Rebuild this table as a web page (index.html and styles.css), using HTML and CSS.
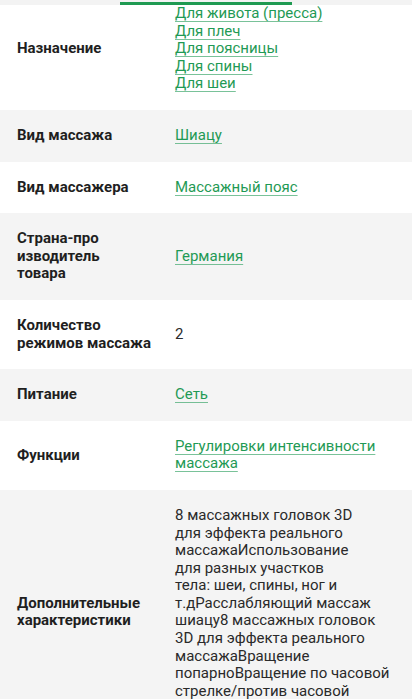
FILE: index.html
```html
<!DOCTYPE html>
<html lang="ru">
<head>
<meta charset="utf-8">
<title>Характеристики</title>
<link rel="stylesheet" href="styles.css">
</head>
<body>
<div class="tabs"><span class="tab-indicator"></span></div>
<dl class="specs">
  <div class="row">
    <dt class="label">Назначение</dt>
    <dd class="value">
      <a href="#" class="link">Для живота (пресса)</a>
      <a href="#" class="link">Для плеч</a>
      <a href="#" class="link">Для поясницы</a>
      <a href="#" class="link">Для спины</a>
      <a href="#" class="link">Для шеи</a>
    </dd>
  </div>
  <div class="row alt">
    <dt class="label">Вид массажа</dt>
    <dd class="value"><a href="#" class="link">Шиацу</a></dd>
  </div>
  <div class="row">
    <dt class="label">Вид массажера</dt>
    <dd class="value"><a href="#" class="link">Массажный пояс</a></dd>
  </div>
  <div class="row alt">
    <dt class="label">Страна-про<br>изводитель<br>товара</dt>
    <dd class="value"><a href="#" class="link">Германия</a></dd>
  </div>
  <div class="row">
    <dt class="label">Количество<br>режимов массажа</dt>
    <dd class="value">2</dd>
  </div>
  <div class="row alt">
    <dt class="label">Питание</dt>
    <dd class="value"><a href="#" class="link">Сеть</a></dd>
  </div>
  <div class="row">
    <dt class="label">Функции</dt>
    <dd class="value"><a href="#" class="link">Регулировки интенсивности<br>массажа</a></dd>
  </div>
  <div class="row alt">
    <dt class="label">Дополнительные<br>характеристики</dt>
    <dd class="value text">8 массажных головок 3D<br>для эффекта реального<br>массажаИспользование<br>для разных участков<br>тела: шеи, спины, ног и<br>т.дРасслабляющий массаж<br>шиацу8 массажных головок<br>3D для эффекта реального<br>массажаВращение<br>попарноВращение по часовой<br>стрелке/против часовой<br>стрелки</dd>
  </div>
</dl>
</body>
</html>
```
FILE: styles.css
```css
* { box-sizing: border-box; }
html, body {
  margin: 0;
  padding: 0;
  background: #ffffff;
}
body {
  font-family: "Roboto", "Inter", "Noto Sans", sans-serif;
  font-size: 15px;
  line-height: 17.6px;
  color: #222222;
  overflow: hidden;
}
.tabs {
  position: fixed;
  top: 0;
  left: 0;
  right: 0;
  height: 5px;
  background: #f3f3f3;
  z-index: 2;
}
.tab-indicator {
  position: absolute;
  left: 120px;
  top: 2px;
  width: 172px;
  height: 3px;
  background: #1f9a52;
}
.specs {
  margin: -12px 0 0 0;
  padding: 0;
}
.row {
  display: grid;
  grid-template-columns: 141px 1fr;
  column-gap: 17px;
  align-items: center;
  padding: 17px 17px 17px 17px;
}
.row.alt {
  background: #f4f4f4;
}
.label {
  margin: 0;
  font-weight: 700;
  color: #1f1f1f;
  white-space: nowrap;
}
.value {
  margin: 0;
  display: flex;
  flex-direction: column;
  align-items: flex-start;
  color: #2a2a2a;
}
.value.text {
  display: block;
  white-space: nowrap;
}
.link {
  color: #1f9a55;
  text-decoration: underline;
  text-decoration-color: rgba(31, 154, 85, 0.6);
  text-decoration-thickness: 1px;
  text-underline-offset: 3px;
}
```
